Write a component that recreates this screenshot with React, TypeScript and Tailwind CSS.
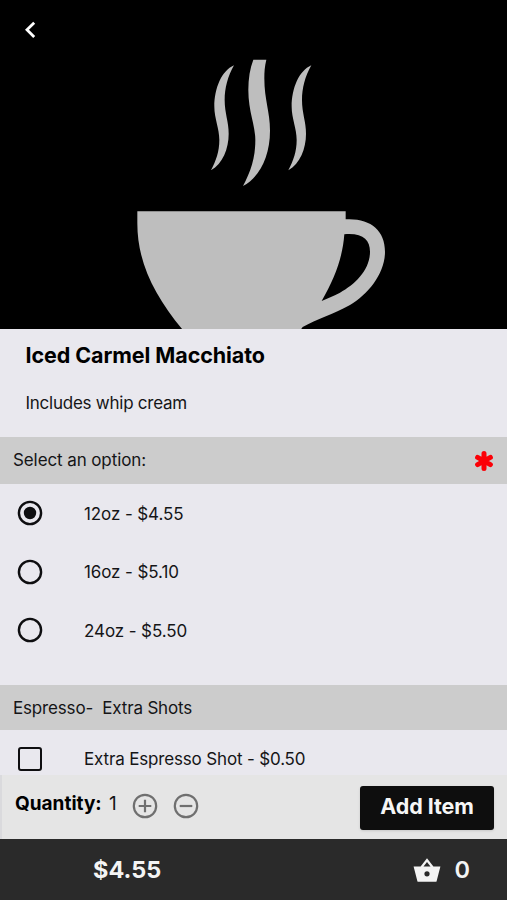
import { useState } from 'react'

const OPTIONS = [
    { label: '12oz', price: '4.55' },
    { label: '16oz', price: '5.10' },
    { label: '24oz', price: '5.50' },
]

function CoffeeCup() {
    return (
        <svg className="block w-full h-full" viewBox="0 0 507 329" fill="#bebebe">
            <g transform="translate(190 40) scale(.33333)">
                <path d="M132 76C95 92 73 145 73 200C73 235 88 265 88 300C88 335 78 362 63 391C98 372 116 325 116 282C116 245 104 220 104 180C104 145 113 110 132 76Z" />
                <path d="M190 59H229C224 80 223 95 223 115C223 180 240 215 240 272C240 350 208 412 159 438C182 395 196 355 196 300C196 255 175 215 175 150C175 115 180 85 190 59Z" />
                <path d="M364 76C327 92 305 145 305 200C305 235 320 265 320 300C320 335 310 362 295 391C330 372 348 325 348 282C348 245 336 220 336 180C336 145 345 110 364 76Z" />
            </g>
            <g transform="translate(120 190) scale(.33333)">
                <path
                    fillRule="evenodd"
                    d="M52 64H677V88C750 84 795 120 795 185C795 250 745 313 690 345C640 372 590 388 548 411L543 418H187C104 318 52 218 52 100ZM673 133C728 128 750 150 750 185C750 240 705 283 660 308C642 318 624 324 605 333C646 262 668 200 673 133Z"
                />
            </g>
        </svg>
    )
}

function Radio({ checked }: { checked: boolean }) {
    return (
        <svg className="size-[26px]" viewBox="0 0 26 26" fill="none">
            <circle cx="13" cy="13" r="11.1" stroke="#0e0e10" strokeWidth="2.4" />
            {checked && <circle cx="13" cy="13" r="6.2" fill="#0e0e10" />}
        </svg>
    )
}

function Asterisk() {
    return (
        <svg className="size-5" viewBox="0 0 20 20" stroke="#fb0007" strokeWidth="5" strokeLinecap="round">
            <path d="M10 2.6V17.4M3.6 6.4L16.4 13.6M16.4 6.4L3.6 13.6" />
        </svg>
    )
}

function Basket() {
    return (
        <svg className="w-7 h-6" viewBox="0 0 28 24" fill="#f4f4f4">
            <path
                fillRule="evenodd"
                d="M14 .3L20.4 8.6H27.4L23.6 23.2Q23.4 23.8 22.8 23.8H5.2Q4.6 23.8 4.4 23.2L.6 8.6H7.6ZM14 4L10.5 8.6H17.5ZM14 13.2A2.6 2.6 0 1 0 14 18.4A2.6 2.6 0 1 0 14 13.2Z"
            />
        </svg>
    )
}

export default function App() {
    const [selected, setSelected] = useState(0)
    const [quantity, setQuantity] = useState(1)

    const total = (Number(OPTIONS[selected].price) * quantity).toFixed(2)

    return (
        <main className="w-[507px] h-[900px] flex flex-col overflow-hidden bg-[#e9e8ee] font-['Inter',sans-serif] text-[#151517]">
            <header className="relative h-[329px] shrink-0 bg-black">
                <CoffeeCup />

                <button className="absolute left-5 top-5">
                    <svg className="size-5" viewBox="0 0 20 20" fill="none" stroke="#fff" strokeWidth="2.8">
                        <path d="M14.2 2.7L7 9.8L14.2 16.9" />
                    </svg>
                </button>
            </header>

            <div className="flex-1 min-h-0 overflow-hidden">
                <section className="h-[108px] pl-[25.5px] pt-3">
                    <h1 className="text-[21.5px] leading-7 font-bold text-black tracking-[-0.08px] whitespace-nowrap">
                        Iced Carmel Macchiato
                    </h1>

                    <p className="mt-[22px] text-[17px] leading-6 tracking-[-0.25px]">
                        Includes whip cream
                    </p>
                </section>

                <div className="h-[47px] pl-[13px] pr-[13px] flex items-center justify-between bg-[#cccccc]">
                    <span className="pt-px text-[17px] tracking-[-0.1px]">Select an option:</span>
                    <Asterisk />
                </div>

                <ul className="h-[201px]">
                    {OPTIONS.map((option, i) => (
                        <li key={option.label} className="h-[58.5px]">
                            <button className="h-[58px] pl-[17px] flex items-center gap-[41px]" onClick={() => setSelected(i)}>
                                <Radio checked={i === selected} />
                                <span className="pt-[3px] text-[17px] tracking-[-0.1px]">
                                    {option.label} - ${option.price}
                                </span>
                            </button>
                        </li>
                    ))}
                </ul>

                <div className="h-[45px] pl-[13px] flex items-center bg-[#cccccc]">
                    <span className="pt-0.5 text-[17px] tracking-[-0.17px] whitespace-pre">Espresso-  Extra Shots</span>
                </div>

                <div className="h-[57px] pl-[18px] flex items-center gap-[42px]">
                    <span className="size-6 rounded-[3px] border-[2.5px] border-[#0e0e10]" />
                    <span className="pt-0.5 text-[17px] tracking-[-0.16px]">Extra Espresso Shot - $0.50</span>
                </div>
            </div>

            <section className="h-[64px] shrink-0 pl-[13px] pr-[13px] flex items-start justify-between border-l-2 border-l-[#dadadd] bg-[#e5e5e5]">
                <div className="flex items-start">
                    <span className="mt-[17px] w-[88px] text-[19px] leading-6 font-bold text-black">Quantity:</span>
                    <span className="mt-[17px] ml-1.5 w-[11px] text-[19px] leading-6">{quantity}</span>

                    <button className="mt-[18px] ml-3" onClick={() => setQuantity(quantity + 1)}>
                        <svg className="size-[26px]" viewBox="0 0 26 26" fill="none" stroke="#6f6f6f" strokeWidth="2.2">
                            <circle cx="13" cy="13" r="11.2" />
                            <path d="M6.7 13H19.3M13 6.7V19.3" />
                        </svg>
                    </button>

                    <button className="mt-[18px] ml-[15px]" onClick={() => setQuantity(Math.max(1, quantity - 1))}>
                        <svg className="size-[26px]" viewBox="0 0 26 26" fill="none" stroke="#6f6f6f" strokeWidth="2.2">
                            <circle cx="13" cy="13" r="11.2" />
                            <path d="M6.7 13H19.3" />
                        </svg>
                    </button>
                </div>

                <button className="mt-[11px] w-[134px] h-11 pb-[3px] rounded-[3px] bg-[#0e0e0e] shadow text-[21.5px] font-bold text-[#f6f6f6] tracking-[-0.1px] whitespace-nowrap">
                    Add Item
                </button>
            </section>

            <footer className="h-[61px] shrink-0 pl-[93px] pr-[37px] flex items-center justify-between bg-[#2a2a2a] text-[#f4f4f4] text-[23.5px] font-bold">
                <span className="pt-px">${total}</span>

                <div className="flex items-center gap-[13px]">
                    <Basket />
                    <span className="pt-px font-semibold">0</span>
                </div>
            </footer>
        </main>
    )
}
